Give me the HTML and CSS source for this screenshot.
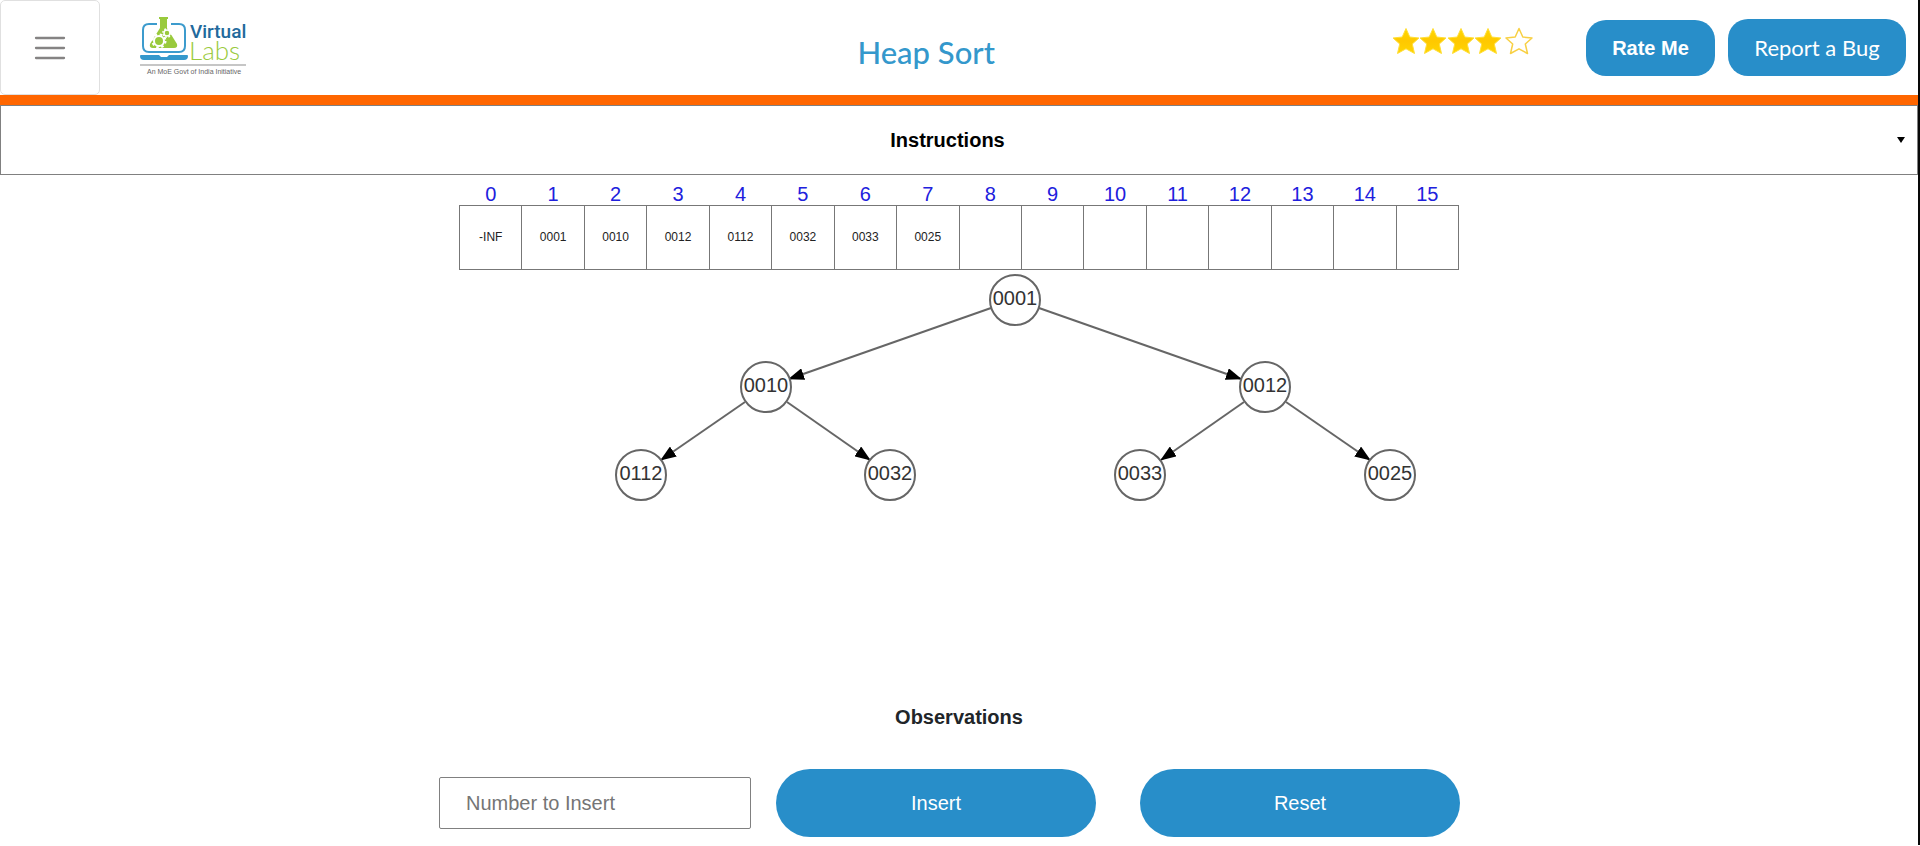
FILE: index.html
```html
<!DOCTYPE html>
<html lang="en">
<head>
<meta charset="utf-8">
<meta name="viewport" content="width=device-width, initial-scale=1">
<title>Heap Sort</title>
<link rel="stylesheet" href="styles.css">
</head>
<body>
<header class="header">
  <div class="header-left">
    <button class="menu-button" type="button" aria-label="Menu">
      <svg width="32" height="24" viewBox="0 0 32 24" aria-hidden="true"><path d="M2 2H30M2 12H30M2 22H30" stroke="#858383" stroke-width="2.300" stroke-linecap="round"/></svg>
    </button>
    <a class="logo" href="#" aria-label="Virtual Labs">
      <svg width="108" height="64" viewBox="0 0 108 64">
        <path d="M17 8H9Q3 8 3 14V30Q3 36 9 36H39Q45 36 45 30V14Q45 8 39 8H31" fill="none" stroke="#3c9bcd" stroke-width="2"/>
        <path d="M0 40Q0 39 1 39H19L21 41H27L29 39H47Q48 39 48 40Q48 44 44 44H4Q0 44 0 40Z" fill="#3498cc"/>
        <path d="M19 1H28V3H27V12L37 28Q38 32 34 32H13Q9 32 10 28L20 12V3H19Z" fill="#99ca3c"/>
        <circle cx="19" cy="25" r="5" fill="none" stroke="#fff" stroke-width="2"/>
        <circle cx="19" cy="25" r="6.5" fill="none" stroke="#fff" stroke-width="2" stroke-dasharray="2.5 2.6"/>
        <circle cx="27" cy="17" r="3" fill="none" stroke="#fff" stroke-width="1.5"/>
        <circle cx="27" cy="17" r="4.2" fill="none" stroke="#fff" stroke-width="1.5" stroke-dasharray="1.7 1.6"/>
        <text class="logo-virtual" x="50" y="22">Virtual</text>
        <text class="logo-labs" x="49" y="44">Labs</text>
        <path d="M0 49H106" stroke="#8d8d8d"/>
        <text class="logo-tagline" x="7" y="58">An MoE Govt of India Initiative</text>
      </svg>
    </a>
  </div>
  <h1 class="title">Heap Sort</h1>
  <div class="header-right">
    <svg class="stars" width="142" height="28" viewBox="0 0 142 28" role="img" aria-label="4 out of 5 stars">
      <defs>
        <linearGradient id="gold" x1="0" y1="0" x2="0" y2="1"><stop offset="0" stop-color="#ffd800"/><stop offset=".5" stop-color="#ffc800"/><stop offset="1" stop-color="#ffd500"/></linearGradient>
        <path id="star" d="M14 1.500L17.800 10L27 11L20.300 17L22.500 26.500L14 21.800L5.500 26.500L7.700 17L1 11L10.200 10Z" stroke-linejoin="round"/>
      </defs>
      <g fill="url(#gold)" stroke="#ffdf3a" stroke-width="1">
        <use href="#star"/><use href="#star" x="27"/><use href="#star" x="55"/><use href="#star" x="82"/>
      </g>
      <use href="#star" x="113" fill="#fff" stroke="#f8d044" stroke-width="1.500"/>
    </svg>
    <div class="header-actions">
      <button class="header-button rate" type="button">Rate Me</button>
      <button class="header-button report" type="button">Report a Bug</button>
    </div>
  </div>
</header>
<main>
  <details class="instructions">
    <summary class="instructions-summary"><span class="instructions-label">Instructions</span><span class="caret"></span></summary>
  </details>
  <section class="workspace">
    <table class="heap-array">
      <thead>
        <tr><th>0</th><th>1</th><th>2</th><th>3</th><th>4</th><th>5</th><th>6</th><th>7</th><th>8</th><th>9</th><th>10</th><th>11</th><th>12</th><th>13</th><th>14</th><th>15</th></tr>
      </thead>
      <tbody>
        <tr><td>-INF</td><td>0001</td><td>0010</td><td>0012</td><td>0112</td><td>0032</td><td>0033</td><td>0025</td><td></td><td></td><td></td><td></td><td></td><td></td><td></td><td></td></tr>
      </tbody>
    </table>
    <svg class="tree" viewBox="0 0 1000 424" role="img" aria-label="Heap tree">
      <defs>
        <marker id="arrow" markerUnits="userSpaceOnUse" markerWidth="16" markerHeight="12" refX="15" refY="6" orient="auto"><path d="M0 0L16 6L0 12Z" fill="#000"/></marker>
      </defs>
      <g class="edges">
        <path d="M532 38L330 109" marker-end="url(#arrow)"/>
        <path d="M580 38L782 109" marker-end="url(#arrow)"/>
        <path d="M286 132L202 190" marker-end="url(#arrow)"/>
        <path d="M328 132L411 190" marker-end="url(#arrow)"/>
        <path d="M785 132L702 190" marker-end="url(#arrow)"/>
        <path d="M827 132L911 190" marker-end="url(#arrow)"/>
      </g>
      <g class="nodes">
        <circle cx="556" cy="30" r="25"/><text x="556" y="35">0001</text>
        <circle cx="307" cy="117" r="25"/><text x="307" y="122">0010</text>
        <circle cx="806" cy="117" r="25"/><text x="806" y="122">0012</text>
        <circle cx="182" cy="205" r="25"/><text x="182" y="210">0112</text>
        <circle cx="431" cy="205" r="25"/><text x="431" y="210">0032</text>
        <circle cx="681" cy="205" r="25"/><text x="681" y="210">0033</text>
        <circle cx="931" cy="205" r="25"/><text x="931" y="210">0025</text>
      </g>
    </svg>
  </section>
  <section class="observations">
    <h2 class="observations-title">Observations</h2>
    <form class="controls">
      <input class="number-input" type="text" placeholder="Number to Insert" aria-label="Number to Insert">
      <div class="control-buttons">
        <button class="control-button" type="button">Insert</button>
        <button class="control-button" type="reset">Reset</button>
      </div>
    </form>
  </section>
</main>
</body>
</html>
```

FILE: styles.css
```css
* {
  box-sizing: border-box;
}

body {
  margin: 0;
  border-right: 2px solid #080808;
  background: #fff;
  color: #212529;
  font: 20px/24px "Liberation Sans", Arial, sans-serif;
}

button,
input {
  font: inherit;
}

.header {
  display: flex;
  border-bottom: 10px solid #f60;
}

.header-left {
  display: flex;
  gap: 40px;
  width: 24%;
}

.menu-button {
  display: grid;
  place-items: center;
  width: 100px;
  height: 95px;
  padding: 0;
  border: 1px solid #e0e0e0;
  border-radius: 5px;
  background: #fff;
}

.logo {
  padding-top: 16px;
}

.logo-virtual {
  font: 500 19px Roboto, sans-serif;
  fill: #22699c;
}

.logo-labs {
  font: 300 26px Lato, sans-serif;
  fill: #99ca3c;
}

.logo-tagline {
  font: 7px "Liberation Sans", Arial, sans-serif;
  fill: #666;
}

.title {
  flex: 1;
  margin: 0;
  padding-top: 32px;
  color: #3498cc;
  font: 500 31px/40px Lato, sans-serif;
  text-align: center;
}

.header-right {
  display: flex;
  align-items: flex-start;
  gap: 52px;
  padding-right: 12px;
}

.stars {
  margin-top: 27px;
}

.header-actions {
  display: flex;
  align-items: flex-end;
  gap: 13px;
  margin-top: 19px;
}

.header-button {
  padding: 0 25px;
  border: 0;
  border-radius: 20px;
  background: #288ec9;
  color: #fff;
}

.rate {
  min-width: 129px;
  height: 56px;
  font-weight: bold;
}

.report {
  min-width: 178px;
  height: 57px;
  font: 22px Lato, sans-serif;
}

.instructions {
  border: 1px solid #808080;
}

.instructions-summary {
  display: flex;
  align-items: center;
  padding: 22px 12px;
  color: #000;
  font-weight: bold;
  list-style: none;
}

.instructions-label {
  flex: 1;
  text-align: center;
}

.caret {
  margin: 0 0 0 15px;
  border: 4px solid transparent;
  border-top: 6px solid #000;
  border-bottom: 0;
}

.workspace {
  max-width: 1000px;
  margin: 0 auto;
  padding-top: 8px;
}

.heap-array {
  width: 100%;
  table-layout: fixed;
  border-collapse: collapse;
}

.heap-array th {
  padding: 0;
  color: #2020dd;
  font-weight: normal;
  line-height: 22px;
}

.heap-array td {
  height: 64px;
  padding: 0 0 2px;
  border: 1px solid #777;
  color: #222;
  font-size: 12px;
  text-align: center;
}

.tree {
  display: block;
  width: 100%;
}

.edges {
  fill: none;
  stroke: #666;
  stroke-width: 2px;
}

.nodes circle {
  fill: #fff;
  stroke: #666;
  stroke-width: 2px;
}

.nodes text {
  fill: #333;
  text-anchor: middle;
}

.observations-title {
  margin: 11px 0 40px;
  font-size: 20px;
  line-height: 24px;
  text-align: center;
}

.controls {
  display: flex;
  justify-content: center;
  align-items: center;
  gap: 25px;
  padding: 0 19px 8px 0;
}

.number-input {
  width: 312px;
  height: 52px;
  padding: 0 26px;
  border: 1px solid #808080;
  border-radius: 2px;
}

.number-input::placeholder {
  color: #757575;
}

.control-buttons {
  display: flex;
  gap: 44px;
}

.control-button {
  width: 320px;
  height: 68px;
  border: 0;
  border-radius: 34px;
  background: #288ec9;
  color: #fff;
}
```
